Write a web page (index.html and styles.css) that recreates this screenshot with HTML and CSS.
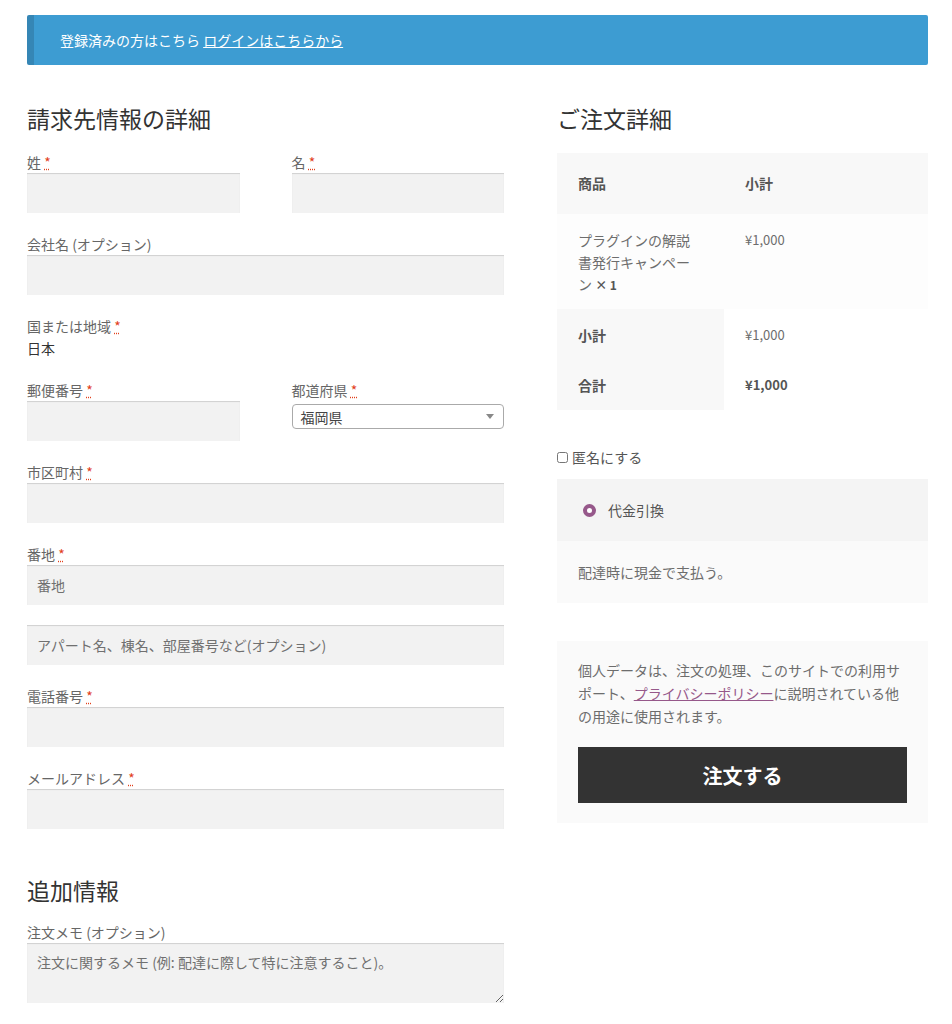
FILE: index.html
```html
<!DOCTYPE html>
<html lang="ja">
<head>
<meta charset="utf-8">
<title>チェックアウト</title>
<link rel="stylesheet" href="styles.css">
</head>
<body>
<div class="page">
  <div class="notice">登録済みの方はこちら <a href="#">ログインはこちらから</a></div>

  <div class="columns">
    <div class="col-left">
      <h3 class="title">請求先情報の詳細</h3>

      <div class="row-half">
        <div class="row">
          <label class="lbl">姓 <abbr class="req" title="必須">*</abbr></label>
          <input class="field" type="text">
        </div>
        <div class="row">
          <label class="lbl">名 <abbr class="req" title="必須">*</abbr></label>
          <input class="field" type="text">
        </div>
      </div>

      <div class="row">
        <label class="lbl">会社名 (オプション)</label>
        <input class="field" type="text">
      </div>

      <div class="row">
        <label class="lbl">国または地域 <abbr class="req" title="必須">*</abbr></label>
        <strong class="country">日本</strong>
      </div>

      <div class="row-half">
        <div class="row">
          <label class="lbl">郵便番号 <abbr class="req" title="必須">*</abbr></label>
          <input class="field" type="text">
        </div>
        <div class="row">
          <label class="lbl">都道府県 <abbr class="req" title="必須">*</abbr></label>
          <div class="select"><span>福岡県</span><span class="arrow"></span></div>
        </div>
      </div>

      <div class="row">
        <label class="lbl">市区町村 <abbr class="req" title="必須">*</abbr></label>
        <input class="field" type="text">
      </div>

      <div class="row">
        <label class="lbl">番地 <abbr class="req" title="必須">*</abbr></label>
        <input class="field" type="text" placeholder="番地">
      </div>

      <div class="row">
        <input class="field" type="text" placeholder="アパート名、棟名、部屋番号など(オプション)">
      </div>

      <div class="row">
        <label class="lbl">電話番号 <abbr class="req" title="必須">*</abbr></label>
        <input class="field" type="tel">
      </div>

      <div class="row">
        <label class="lbl">メールアドレス <abbr class="req" title="必須">*</abbr></label>
        <input class="field" type="email">
      </div>

      <h3 class="title title-extra">追加情報</h3>
      <div class="row">
        <label class="lbl">注文メモ (オプション)</label>
        <textarea class="field notes" placeholder="注文に関するメモ (例: 配達に際して特に注意すること)。"></textarea>
      </div>
    </div>

    <div class="col-right">
      <h3 class="title title-order">ご注文詳細</h3>
      <table class="order">
        <colgroup><col class="c1"><col class="c2"></colgroup>
        <thead>
          <tr><th>商品</th><th>小計</th></tr>
        </thead>
        <tbody>
          <tr>
            <td class="prod">プラグインの解説書発行キャンペーン <strong class="qty">×&nbsp;1</strong></td>
            <td class="amt">¥1,000</td>
          </tr>
        </tbody>
        <tfoot>
          <tr class="sub"><th>小計</th><td class="amt">¥1,000</td></tr>
          <tr class="tot"><th>合計</th><td class="amt"><strong>¥1,000</strong></td></tr>
        </tfoot>
      </table>

      <p class="anon"><input type="checkbox" class="cb">匿名にする</p>

      <div class="payment">
        <div class="method"><span class="radio"></span>代金引換</div>
        <div class="method-desc">配達時に現金で支払う。</div>
      </div>

      <div class="place">
        <p class="privacy">個人データは、注文の処理、このサイトでの利用サポート、<a href="#">プライバシーポリシー</a>に説明されている他の用途に使用されます。</p>
        <button class="btn" type="button">注文する</button>
      </div>
    </div>
  </div>
</div>
</body>
</html>
```

FILE: styles.css
```css
html, body {
  margin: 0;
  padding: 0;
  background: #ffffff;
}

body {
  font-family: "Noto Sans CJK JP", "Noto Sans", sans-serif;
  font-size: 14px;
  line-height: 22px;
  color: #6d6d6d;
}

.page {
  padding: 15px 24px 0 27px;
  width: 901px;
}

.notice {
  background: #3d9cd2;
  border-left: 7px solid #3586b5;
  border-radius: 2px;
  color: #ffffff;
  padding: 14px 26px;
  line-height: 22px;
}

.notice a {
  color: #ffffff;
  text-decoration: underline;
}

.columns {
  display: grid;
  grid-template-columns: 477px 371px;
  column-gap: 53px;
  margin-top: 38px;
}

.title {
  margin: 0 0 18px;
  font-size: 23px;
  line-height: 30px;
  font-weight: 400;
  color: #333333;
}

.title-order {
  margin-bottom: 20px;
}

.title-extra {
  margin-top: 46px;
  margin-bottom: 16px;
}

.row-half {
  display: grid;
  grid-template-columns: 1fr 1fr;
  column-gap: 52px;
}

.row {
  margin-bottom: 20px;
}

.lbl {
  display: block;
  line-height: 22px;
  color: #666666;
}

.req {
  color: #e2401c;
  text-decoration: underline dotted #e2401c;
  font-weight: 400;
}

.country {
  display: block;
  color: #333333;
  font-weight: 400;
  line-height: 22px;
}

.field {
  display: block;
  box-sizing: border-box;
  width: 100%;
  height: 40px;
  margin: 0;
  border: 0;
  background: #f2f2f2;
  box-shadow: inset 0 1px 1px rgba(0, 0, 0, 0.14);
  padding: 0 10px;
  font-family: inherit;
  font-size: 14px;
  color: #43454b;
  outline: none;
}

.field::placeholder {
  color: #707070;
  opacity: 1;
}

.notes {
  height: 60px;
  padding: 8px 10px;
  line-height: 22px;
  resize: vertical;
}

.select {
  box-sizing: border-box;
  margin-top: 3px;
  height: 25px;
  border: 1px solid #aaaaaa;
  border-radius: 4px;
  background: #ffffff;
  padding: 0 8px;
  display: flex;
  align-items: center;
  justify-content: space-between;
  color: #444444;
  line-height: 22px;
}

.arrow {
  width: 0;
  height: 0;
  border-left: 4px solid transparent;
  border-right: 4px solid transparent;
  border-top: 5px solid #888888;
  margin-right: 1px;
}

/* order table */
.order {
  width: 100%;
  border-collapse: collapse;
  border-spacing: 0;
  table-layout: fixed;
  margin: 0 0 36px;
}

.order .c1 { width: 167px; }
.order .c2 { width: 204px; }

.order th,
.order td {
  text-align: left;
  padding: 14px 21px;
  vertical-align: top;
  line-height: 22px;
}

.order th {
  font-weight: 700;
  color: #555555;
  background: #f8f8f8;
}

.order thead th {
  padding: 19px 21px 20px;
  vertical-align: middle;
}

.order tbody td {
  background: #fdfdfd;
  padding: 15px 21px 13px;
}

.order .prod {
  color: #6d6d6d;
}

.order .qty {
  font-size: 12px;
  font-weight: 700;
  color: #555555;
}

.order .amt {
  font-size: 13px;
  color: #6d6d6d;
}

.order tfoot td {
  background: #ffffff;
}

.order tfoot .sub th,
.order tfoot .sub td {
  padding: 15px 21px 15px;
}

.order tfoot .tot th,
.order tfoot .tot td {
  padding: 13px 21px 14px;
}

.order tfoot strong {
  color: #555555;
}

.anon {
  margin: 0 0 11px;
  display: flex;
  align-items: center;
  line-height: 22px;
  color: #555555;
}

.cb {
  width: 11px;
  height: 11px;
  margin: 0 4px 0 0;
}

.payment {
  margin-bottom: 38px;
}

.method {
  background: #f4f4f4;
  height: 62px;
  box-sizing: border-box;
  padding: 0 26px;
  display: flex;
  align-items: center;
  color: #555555;
}

.radio {
  box-sizing: border-box;
  width: 13px;
  height: 13px;
  border-radius: 50%;
  border: 4px solid #96588a;
  background: #ffffff;
  margin-right: 12px;
}

.method-desc {
  background: #fafafa;
  padding: 20px 21px;
  line-height: 22px;
  color: #6d6d6d;
}

.place {
  background: #fafafa;
  padding: 18px 21px 20px;
}

.privacy {
  margin: 0 0 19px;
  line-height: 23px;
  color: #6d6d6d;
}

.privacy a {
  color: #96588a;
  text-decoration: underline;
}

.btn {
  display: block;
  width: 100%;
  height: 56px;
  border: 0;
  margin: 0;
  background: #333333;
  color: #ffffff;
  font-family: inherit;
  font-size: 20px;
  font-weight: 700;
  cursor: pointer;
}
```
